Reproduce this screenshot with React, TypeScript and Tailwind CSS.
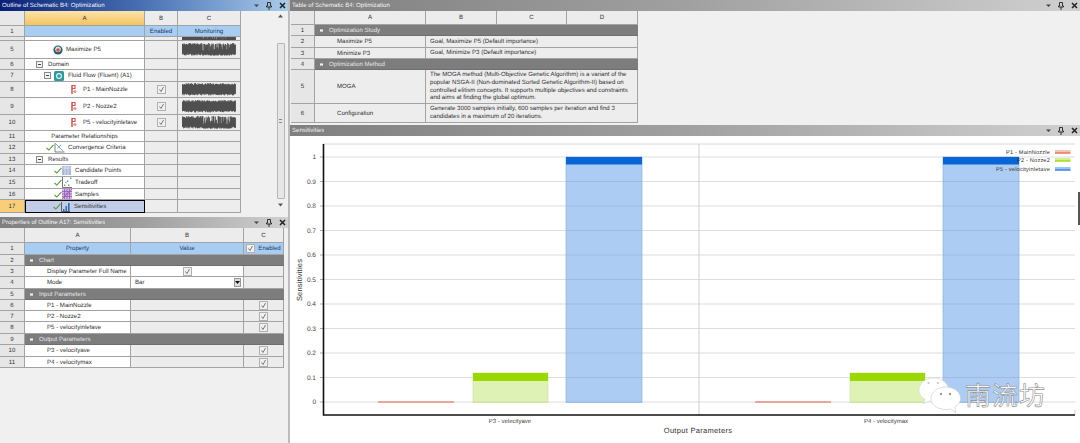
import type { ReactNode } from "react";

// deterministic noise so the monitoring traces stay the same between runs
function noise(seed: number, i: number) {
  const v = Math.sin(seed * 12.9898 + i * 78.233) * 43758.5453;
  return v - Math.floor(v);
}

function Trace({ seed, gaps = false }: { seed: number; gaps?: boolean }) {
  const bars = Array.from({ length: 108 }, (_, i) => {
    const a = noise(seed, i);
    const b = noise(seed + 3, i);
    const deep = gaps && i > 40 && i < 100 && a > 0.62;
    const top = deep ? 3 + b * 5 : b * 2;
    const bottom = deep ? 12.5 : 12.5 - a * 2;
    return `M${i / 2} ${top}V${bottom}`;
  }).join("");
  return (
    <svg width="54" height="13" viewBox="0 0 54 13" className="block">
      <path d={bars} stroke="#3f3f3f" strokeWidth="0.75" fill="none" />
    </svg>
  );
}

function Check() {
  return (
    <svg width="9" height="9" viewBox="0 0 9 9" className="block">
      <rect x="0.5" y="0.5" width="8" height="8" fill="#f0f0f0" stroke="#b0b0b0" />
      <path d="M2.5 4.5 L4 6.5 L6.5 2" stroke="#6a6a6a" strokeWidth="0.9" fill="none" />
    </svg>
  );
}

function Toggle({ dark = false }: { dark?: boolean }) {
  return (
    <svg width="7" height="7" viewBox="0 0 7 7" className="block shrink-0">
      <rect x="0.5" y="0.5" width="6" height="6" fill={dark ? "none" : "#f4f4f4"} stroke={dark ? "none" : "#8a8a8a"} />
      <path d="M2 3.5H5" stroke={dark ? "#f0f0f0" : "#444"} />
      {dark && <path d="M2 2.5H5M2 4.5H5" stroke="#f0f0f0" strokeWidth="0.6" />}
    </svg>
  );
}

function Tick() {
  return (
    <svg width="8" height="7" viewBox="0 0 8 7" className="block shrink-0">
      <path d="M0.5 4 L2.8 6 L7.5 0.8" stroke="#5e9a3c" strokeWidth="1.1" fill="none" />
    </svg>
  );
}

function ParamIcon() {
  return (
    <svg width="7" height="11" viewBox="0 0 7 11" className="block">
      <path d="M2 1V10" stroke="#d6504c" strokeWidth="1.5" fill="none" />
      <path d="M2 1.5H5V4.5H2" stroke="#d6504c" strokeWidth="1.1" fill="none" />
      <path d="M2 7.5H4" stroke="#e58a80" strokeWidth="1.2" fill="none" />
      <circle cx="5" cy="7.5" r="1.5" fill="#ea9a90" />
    </svg>
  );
}

function GoalIcon() {
  return (
    <svg width="10" height="10" viewBox="0 0 10 10" className="block">
      <circle cx="5" cy="5" r="4.6" fill="#2b5f78" />
      <circle cx="5" cy="4.2" r="2.8" fill="#d9e6e8" />
      <circle cx="5" cy="5" r="1.8" fill="#d8502a" />
    </svg>
  );
}

function FluentIcon() {
  return (
    <svg width="10" height="10" viewBox="0 0 10 10" className="block">
      <rect width="10" height="10" rx="1.5" fill="#2f9a9e" />
      <circle cx="5" cy="5" r="2.4" fill="none" stroke="#e4f4f4" strokeWidth="1.1" />
    </svg>
  );
}

function ConvergenceIcon() {
  return (
    <svg width="11" height="11" viewBox="0 0 11 11" className="block">
      <path d="M1 1V10H10.5" stroke="#666" strokeWidth="0.8" fill="none" />
      <path d="M1.5 1.5 L9.5 9.5M3.5 6 L7 3" stroke="#79a9a8" strokeWidth="1" fill="none" />
    </svg>
  );
}

function CandidateIcon() {
  return (
    <svg width="9" height="9" viewBox="0 0 9 9" className="block">
      <rect width="9" height="9" fill="#a9b9dc" />
      <path d="M3 0V9M6 0V9M0 2H9" stroke="#eef2f8" strokeWidth="0.7" />
    </svg>
  );
}

function TradeoffIcon() {
  return (
    <svg width="10" height="11" viewBox="0 0 10 11" className="block">
      <path d="M0.5 0V10.5H10" stroke="#555" strokeWidth="0.8" fill="none" />
      <path d="M2 9h1.4v-1.4H2zM5 5h1.4V3.6H5zM8 2h1.4V.6H8zM3.5 6h1.2V4.8H3.5z" fill="#5db070" />
      <path d="M6 9h1.4V7.6H6z" fill="#c46fb0" />
    </svg>
  );
}

function SamplesIcon() {
  return (
    <svg width="10" height="10" viewBox="0 0 10 10" className="block">
      <rect width="10" height="10" fill="#d8b8ea" />
      <path d="M2.5 0V10M5 0V10M7.5 0V10M0 2.5H10M0 5H10M0 7.5H10" stroke="#8050c0" strokeWidth="0.7" />
      <path d="M0 10L10 0" stroke="#d04070" strokeWidth="0.7" />
    </svg>
  );
}

function BarsIcon() {
  return (
    <svg width="9" height="10" viewBox="0 0 9 10" className="block">
      <path d="M0.5 0V9.5H9" stroke="#444" strokeWidth="0.8" fill="none" />
      <path d="M2 7h1.5v2H2zM4.5 4H6v5H4.5zM7 1h1.6v8H7z" fill="#2c6cb5" />
    </svg>
  );
}

function PanelButtons() {
  return (
    <div className="ml-auto flex items-center gap-[7px] pr-[2px]">
      <svg width="5" height="5" viewBox="0 0 5 5" className="block">
        <path d="M0 1.5H5L2.5 4Z" fill="#444" />
      </svg>
      <svg width="6" height="8" viewBox="0 0 6 8" className="block">
        <path d="M1.5 0.5H4.5V4H5.5V5H0.5V4H1.5ZM3 5V8" stroke="#222" strokeWidth="0.9" fill="none" />
      </svg>
      <svg width="7" height="7" viewBox="0 0 7 7" className="block">
        <path d="M1 1L6 6M6 1L1 6" stroke="#222" strokeWidth="1.5" />
      </svg>
    </div>
  );
}

function TitleBar({ title, blue = false }: { title: string; blue?: boolean }) {
  return (
    <div
      className={`flex h-[11px] items-center pl-[2px] text-[#f2f2f2] ${
        blue
          ? "bg-gradient-to-r from-[#0a1f78] via-[#4a71b4] to-[#a9cbe8]"
          : "bg-gradient-to-r from-[#7f7f7f] via-[#a0a0a0] to-[#d0d0d0]"
      }`}
    >
      <span className="truncate">{title}</span>
      <PanelButtons />
    </div>
  );
}

const line = "border-b border-r border-[#a3a3a3]";

function Num({ children, active = false, h }: { children: ReactNode; active?: boolean; h: string }) {
  return (
    <div
      className={`flex items-center justify-center ${h} ${line} ${
        active ? "bg-[#f8cf78]" : "bg-[#e6e6e6]"
      } text-[#333]`}
    >
      {children}
    </div>
  );
}

type OutlineRow = {
  n: string;
  h: string;
  a?: ReactNode;
  checked?: boolean;
  trace?: number;
  gaps?: boolean;
  selected?: boolean;
};

const outlineRows: OutlineRow[] = [
  { n: "", h: "h-[4px]", trace: 9, gaps: true },
  {
    n: "5",
    h: "h-[18px]",
    a: (
      <div className="flex items-center gap-[3px] pl-[28px]">
        <GoalIcon />
        <span>Maximize P5</span>
      </div>
    ),
    trace: 5,
    gaps: true,
  },
  {
    n: "6",
    h: "h-[11px]",
    a: (
      <div className="flex items-center gap-[5px] pl-[11px]">
        <Toggle />
        <span>Domain</span>
      </div>
    ),
  },
  {
    n: "7",
    h: "h-[12px]",
    a: (
      <div className="flex items-center gap-[3px] pl-[19px]">
        <Toggle />
        <FluentIcon />
        <span className="ml-[1px]">Fluid Flow (Fluent) (A1)</span>
      </div>
    ),
  },
  {
    n: "8",
    h: "h-[16px]",
    a: (
      <div className="flex items-center gap-[6px] pl-[45px]">
        <ParamIcon />
        <span>P1 - MainNozzle</span>
      </div>
    ),
    checked: true,
    trace: 8,
  },
  {
    n: "9",
    h: "h-[17px]",
    a: (
      <div className="flex items-center gap-[6px] pl-[45px]">
        <ParamIcon />
        <span>P2 - Nozze2</span>
      </div>
    ),
    checked: true,
    trace: 11,
  },
  {
    n: "10",
    h: "h-[16px]",
    a: (
      <div className="flex items-center gap-[6px] pl-[45px]">
        <ParamIcon />
        <span>P5 - velocityinletave</span>
      </div>
    ),
    checked: true,
    trace: 14,
    gaps: true,
  },
  { n: "11", h: "h-[11px]", a: <div className="text-center">Parameter Relationships</div> },
  {
    n: "12",
    h: "h-[12px]",
    a: (
      <div className="flex items-center pl-[21px]">
        <Tick />
        <ConvergenceIcon />
        <span className="ml-[3px]">Convergence Criteria</span>
      </div>
    ),
  },
  {
    n: "13",
    h: "h-[11px]",
    a: (
      <div className="flex items-center gap-[5px] pl-[11px]">
        <Toggle />
        <span>Results</span>
      </div>
    ),
  },
  {
    n: "14",
    h: "h-[12px]",
    a: (
      <div className="flex items-center pl-[29px]">
        <Tick />
        <CandidateIcon />
        <span className="ml-[4px]">Candidate Points</span>
      </div>
    ),
  },
  {
    n: "15",
    h: "h-[12px]",
    a: (
      <div className="flex items-center pl-[29px]">
        <Tick />
        <TradeoffIcon />
        <span className="ml-[3px]">Tradeoff</span>
      </div>
    ),
  },
  {
    n: "16",
    h: "h-[11px]",
    a: (
      <div className="flex items-center pl-[29px]">
        <Tick />
        <SamplesIcon />
        <span className="ml-[3px]">Samples</span>
      </div>
    ),
  },
  {
    n: "17",
    h: "h-[13px]",
    selected: true,
    a: (
      <div className="flex items-center pl-[27px]">
        <Tick />
        <BarsIcon />
        <span className="ml-[4px]">Sensitivities</span>
      </div>
    ),
  },
];

function Outline() {
  return (
    <div className="flex h-[217px] flex-col">
      <TitleBar title="Outline of Schematic B4: Optimization" blue />
      <div className="flex flex-1 pr-[3px]">
        <div className="grid w-[241px] grid-cols-[25px_120px_33px_63px] content-start">
          <div className={`h-[15px] bg-[#e8e8e8] ${line}`} />
          <div className={`flex h-[15px] items-center justify-center bg-gradient-to-b from-[#fbe3a8] to-[#f3c45e] ${line}`}>A</div>
          <div className={`flex h-[15px] items-center justify-center bg-[#ececec] ${line}`}>B</div>
          <div className={`flex h-[15px] items-center justify-center bg-[#ececec] ${line}`}>C</div>

          <Num h="h-[11px]">1</Num>
          <div className={`h-[11px] bg-[#a8cdf3] ${line}`} />
          <div className={`flex h-[11px] items-center justify-center bg-[#a8cdf3] text-[#1c3d66] ${line}`}>Enabled</div>
          <div className={`flex h-[11px] items-center justify-center bg-[#a8cdf3] text-[#1c3d66] ${line}`}>Monitoring</div>

          {outlineRows.map((row) => (
            <div key={row.n || "clip"} className="contents">
              <Num h={row.h} active={row.selected}>
                {row.n}
              </Num>
              <div
                className={`flex items-center overflow-hidden ${row.h} ${
                  row.selected ? "border-[1.5px] border-black bg-[#c2cee8]" : `bg-white ${line}`
                }`}
              >
                <div className="w-full">{row.a}</div>
              </div>
              <div className={`flex items-center justify-center bg-[#ededed] ${row.h} ${line}`}>
                {row.checked && <Check />}
              </div>
              <div className={`flex items-center justify-center overflow-hidden bg-[#ededed] ${row.h} ${line}`}>
                {row.trace !== undefined && <Trace seed={row.trace} gaps={row.gaps} />}
              </div>
            </div>
          ))}
        </div>
        <div className="ml-auto flex w-[9px] flex-col items-center pt-[3px]">
          <svg width="5" height="4" viewBox="0 0 5 4" className="block">
            <path d="M0 3.5L2.5 0.5L5 3.5Z" fill="#555" />
          </svg>
          <div className="mt-[25px] flex h-[156px] w-[8px] items-center justify-center rounded-[1px] border border-[#b5b5b5] bg-[#e6e6e6]">
            <div className="h-[4px] w-[3px] border-y border-[#888]" />
          </div>
          <svg width="5" height="4" viewBox="0 0 5 4" className="mt-[4px] block">
            <path d="M0 0.5L2.5 3.5L5 0.5Z" fill="#555" />
          </svg>
        </div>
      </div>
    </div>
  );
}

const propRow = "grid grid-cols-[25px_106px_113px_40px]";

function Section({ n, label, cols, h = "h-[11px]" }: { n: string; label: string; cols: string; h?: string }) {
  return (
    <div className={cols}>
      <Num h={h}>{n}</Num>
      <div className={`col-start-2 -col-end-1 flex items-center gap-[4px] bg-[#7d7d7d] pl-[3px] text-[#e4e4e4] ${h} border-b border-[#6e6e6e]`}>
        <Toggle dark />
        <span>{label}</span>
      </div>
    </div>
  );
}

function ParamRow({ n, label, h = "h-[11px]" }: { n: string; label: string; h?: string }) {
  return (
    <div className={propRow}>
      <Num h={h}>{n}</Num>
      <div className={`flex items-center bg-white pl-[22px] ${h} ${line}`}>{label}</div>
      <div className={`bg-[#ececec] ${h} ${line}`} />
      <div className={`flex items-center justify-center bg-[#ececec] ${h} ${line}`}>
        <Check />
      </div>
    </div>
  );
}

function Properties() {
  return (
    <div className="flex flex-1 flex-col">
      <TitleBar title="Properties of Outline A17: Sensitivities" />
      <div className="w-[285px]">
        <div className={propRow}>
          <div className={`h-[15px] bg-[#e8e8e8] ${line}`} />
          <div className={`flex h-[15px] items-center justify-center bg-[#ececec] ${line}`}>A</div>
          <div className={`flex h-[15px] items-center justify-center bg-[#ececec] ${line}`}>B</div>
          <div className={`flex h-[15px] items-center justify-center bg-[#ececec] ${line}`}>C</div>
        </div>
        <div className={`${propRow} text-[#1c3d66]`}>
          <Num h="h-[12px]">1</Num>
          <div className={`flex h-[12px] items-center justify-center bg-[#a8cdf3] ${line}`}>Property</div>
          <div className={`flex h-[12px] items-center justify-center bg-[#a8cdf3] ${line}`}>Value</div>
          <div className={`flex h-[12px] items-center justify-center gap-[3px] bg-[#a8cdf3] ${line}`}>
            <Check />
            <span>Enabled</span>
          </div>
        </div>
        <Section n="2" label="Chart" cols={propRow} />
        <div className={propRow}>
          <Num h="h-[11px]">3</Num>
          <div className={`flex h-[11px] items-center whitespace-nowrap bg-white pl-[22px] ${line}`}>Display Parameter Full Name</div>
          <div className={`flex h-[11px] items-center justify-center bg-white ${line}`}>
            <Check />
          </div>
          <div className={`h-[11px] bg-[#ececec] ${line}`} />
        </div>
        <div className={propRow}>
          <Num h="h-[12px]">4</Num>
          <div className={`flex h-[12px] items-center bg-white pl-[22px] ${line}`}>Mode</div>
          <div className={`flex h-[12px] items-center justify-between bg-white pl-[4px] pr-[2px] ${line}`}>
            <span>Bar</span>
            <div className="flex h-[9px] w-[7px] items-center justify-center border border-[#999] bg-[#ddd]">
              <svg width="5" height="3" viewBox="0 0 5 3" className="block">
                <path d="M0 0H5L2.5 3Z" fill="#111" />
              </svg>
            </div>
          </div>
          <div className={`h-[12px] bg-[#ececec] ${line}`} />
        </div>
        <Section n="5" label="Input Parameters" cols={propRow} />
        <ParamRow n="6" label="P1 - MainNozzle" />
        <ParamRow n="7" label="P2 - Nozze2" />
        <ParamRow n="8" label="P5 - velocityinletave" h="h-[12px]" />
        <Section n="9" label="Output Parameters" cols={propRow} />
        <ParamRow n="10" label="P3 - velocityave" h="h-[12px]" />
        <ParamRow n="11" label="P4 - velocitymax" />
      </div>
    </div>
  );
}

const tableCols = "grid grid-cols-[24px_111px_71px_70px_71px]";

function SchematicRow({ n, a, h, children }: { n: string; a: string; h: string; children: ReactNode }) {
  return (
    <div className={tableCols}>
      <Num h={h}>{n}</Num>
      <div className={`flex items-center bg-[#ededed] pl-[22px] ${h} ${line}`}>{a}</div>
      <div className={`col-span-3 flex items-center bg-[#ededed] pl-[4px] pr-[2px] leading-[7.6px] ${h} ${line}`}>
        <div>{children}</div>
      </div>
    </div>
  );
}

function ScheduleTable() {
  return (
    <div className="flex h-[125px] flex-col">
      <TitleBar title="Table of Schematic B4: Optimization" />
      <div className="w-[348px] pl-[1px]">
        <div className={tableCols}>
          <div className={`h-[14px] bg-[#e8e8e8] ${line}`} />
          <div className={`flex h-[14px] items-center justify-center bg-[#ececec] ${line}`}>A</div>
          <div className={`flex h-[14px] items-center justify-center bg-[#ececec] ${line}`}>B</div>
          <div className={`flex h-[14px] items-center justify-center bg-[#ececec] ${line}`}>C</div>
          <div className={`flex h-[14px] items-center justify-center bg-[#ececec] ${line}`}>D</div>
        </div>
        <Section n="1" label="Optimization Study" cols={tableCols} />
        <SchematicRow n="2" a="Maximize P5" h="h-[12px]">
          Goal, Maximize P5 (Default importance)
        </SchematicRow>
        <SchematicRow n="3" a="Minimize P3" h="h-[11px]">
          Goal, Minimize P3 (Default importance)
        </SchematicRow>
        <Section n="4" label="Optimization Method" cols={tableCols} />
        <SchematicRow n="5" a="MOGA" h="h-[34px]">
          The MOGA method (Multi-Objective Genetic Algorithm) is a variant of the popular NSGA-II (Non-dominated Sorted
          Genetic Algorithm-II) based on controlled elitism concepts. It supports multiple objectives and constraints
          and aims at finding the global optimum.
        </SchematicRow>
        <SchematicRow n="6" a="Configuration" h="h-[19px]">
          Generate 3000 samples initially, 600 samples per iteration and find 3 candidates in a maximum of 20 iterations.
        </SchematicRow>
      </div>
    </div>
  );
}

const ticks = ["1", "0.9", "0.8", "0.7", "0.6", "0.5", "0.4", "0.3", "0.2", "0.1", "0"];
const barGroups = [378, 755];

function Chart() {
  return (
    <svg viewBox="290 136 790 307" width="790" height="307" className="block" fontFamily="Liberation Sans, sans-serif">
      <rect x="290" y="136" width="790" height="307" fill="#ffffff" />
      <path d="M323 144H1075" stroke="#d8d8d8" />
      {ticks.map((t, i) => {
        const y = 157 + i * 24.5;
        return (
          <g key={t}>
            <path d={`M323 ${y}H1075`} stroke="#d9d9d9" strokeWidth="0.9" />
            <path d={`M320 ${y}H323`} stroke="#888" strokeWidth="0.7" />
            <text x="316" y={y + 2} fontSize="6.5" fill="#444" textAnchor="end">
              {t}
            </text>
          </g>
        );
      })}
      <path d="M699 144V415M1075 410V415" stroke="#cfcfcf" />
      {barGroups.map((x) => (
        <g key={x}>
          <rect x={x} y="401.5" width="76" height="1" fill="#e0604a" />
          <rect x={x + 95} y="373" width="75" height="29.5" fill="#b8e35e" fillOpacity="0.45" stroke="#c4e48c" strokeWidth="0.6" />
          <rect x={x + 95} y="373" width="75" height="8" fill="#99d900" />
          <rect x={x + 188} y="157" width="76" height="245.5" fill="#5c9ae8" fillOpacity="0.5" stroke="#8ab2e6" strokeWidth="0.7" />
          <rect x={x + 188} y="157" width="76" height="7.5" fill="#0765d8" />
        </g>
      ))}
      <path d="M323.5 144V415H1075" stroke="#111" strokeWidth="1.6" fill="none" />
      <text x="510" y="423" fontSize="6" fill="#444" textAnchor="middle">
        P3 - velecityave
      </text>
      <text x="886" y="423" fontSize="6" fill="#444" textAnchor="middle">
        P4 - velocitymax
      </text>
      <text x="698" y="433" fontSize="7.5" fill="#333" textAnchor="middle" letterSpacing="0.3">
        Output Parameters
      </text>
      <text x="302" y="280" fontSize="7.5" fill="#333" textAnchor="middle" letterSpacing="0.2" transform="rotate(-90 302 280)">
        Sensitivities
      </text>
      {[
        { y: 154, label: "P1 - MainNozzle", c: "#e8684a", f: "#f6c4b4" },
        { y: 162, label: "P2 - Nozze2", c: "#99d900", f: "#d4ee90" },
        { y: 171, label: "P5 - velocityinletave", c: "#1f78e0", f: "#9cc4f0" },
      ].map((l) => (
        <g key={l.label}>
          <text x="1050" y={l.y} fontSize="5.6" fill="#333" textAnchor="end" letterSpacing="0.2">
            {l.label}
          </text>
          <rect x="1055" y={l.y - 4} width="15.5" height="3.5" fill={l.f} />
          <path d={`M1055 ${l.y - 1}H1070.5`} stroke={l.c} strokeWidth="1.2" />
        </g>
      ))}
    </svg>
  );
}

function Watermark() {
  return (
    <div className="absolute left-[917px] top-[376px] flex items-center">
      <svg width="46" height="38" viewBox="0 0 46 38" className="block">
        <path
          d="M17 2C8 2 2 7.5 2 14C2 18 4.5 21.5 8 23.5L6.5 28L12 25C13 25.2 14 25.4 15 25.4H26C31 22 33 18 32 14C31 7 25 2 17 2Z"
          fill="#ffffff"
          fillOpacity="0.9"
          stroke="#d8d8d8"
          strokeWidth="0.7"
        />
        <path
          d="M29 11C20.5 11 14 16 14 22.5C14 29 20.5 33.5 29 33.5C30.5 33.5 32 33.3 33.4 33L39 37L37.8 31.3C41 29.3 43.5 26.3 43.5 22.5C43.5 16 37 11 29 11Z"
          fill="#ffffff"
          stroke="#cfcfcf"
          strokeWidth="0.7"
        />
        <circle cx="11.5" cy="7" r="1" fill="#c0c0c0" />
        <circle cx="21" cy="7" r="1" fill="#c0c0c0" />
        <circle cx="24" cy="18" r="1.2" fill="#9a9a9a" />
        <circle cx="33" cy="18" r="1.2" fill="#9a9a9a" />
      </svg>
      <span className="ml-[2px] font-['Noto_Sans_CJK_SC',sans-serif] text-[26px] leading-none tracking-[1px] text-white/85 [-webkit-text-stroke:0.6px_#8f8f8f]">
        南流坊
      </span>
    </div>
  );
}

export default function App() {
  return (
    <div className="relative flex h-[443px] w-[1080px] overflow-hidden bg-[#f0f0f0] font-['Liberation_Sans',sans-serif] text-[6.1px] leading-[9px] text-[#333] [text-rendering:geometricPrecision]">
      <div className="flex w-[288px] shrink-0 flex-col">
        <Outline />
        <Properties />
      </div>
      <div className="w-[2px] shrink-0 bg-[#bcbcbc]" />
      <div className="flex min-w-0 flex-1 flex-col">
        <ScheduleTable />
        <div className="flex flex-1 flex-col">
          <TitleBar title="Sensitivities" />
          <Chart />
        </div>
      </div>
      <Watermark />
      <div className="absolute right-0 top-[192px] h-[33px] w-[2px] bg-[#555]" />
    </div>
  );
}
